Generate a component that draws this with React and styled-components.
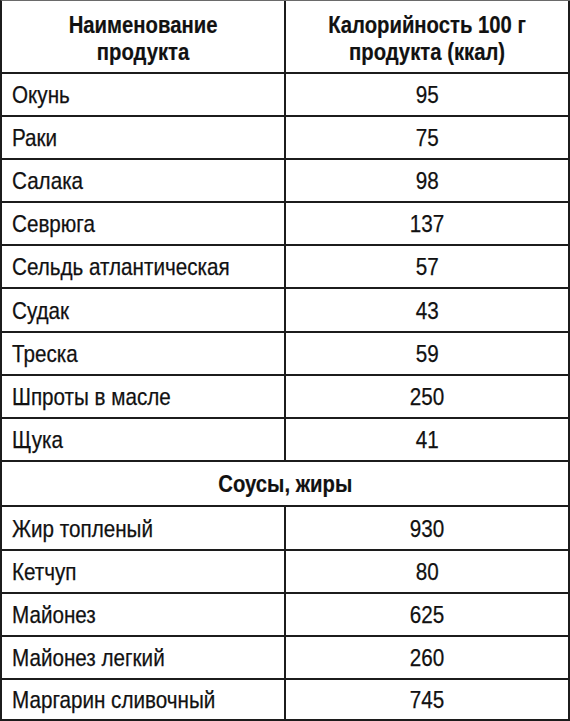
import React from "react";
import styled, { createGlobalStyle } from "styled-components";

const Global = createGlobalStyle`
  html, body { margin: 0; padding: 0; background: #fff; }
  body {
    font-family: "Liberation Sans", Arial, Helvetica, sans-serif;
    color: #111;
  }
`;

const Table = styled.table`
  width: 570px;
  table-layout: fixed;
  border-spacing: 0;
  border-collapse: separate;
  border-left: 2px solid #1c1c1c;
  border-top: 1px solid #6a6a6a;
  font-size: 24px;
  line-height: 27px;
`;

const Col = styled.col`
  width: 284px;
`;

const HeadRow = styled.tr`
  height: 73px;
`;

const Row = styled.tr`
  height: ${(p) => p.$h || 43.2}px;
`;

const Cell = styled.td`
  box-sizing: border-box;
  border-right: 2px solid #1c1c1c;
  border-bottom: 2px solid #1c1c1c;
  padding: ${(p) => (p.$align === "left" ? "0 0 0 10px" : "0")};
  text-align: ${(p) => p.$align || "center"};
  vertical-align: middle;
  font-weight: ${(p) => (p.$bold ? 700 : 400)};
  white-space: nowrap;
  overflow: hidden;
`;

const HeadCell = styled(Cell).attrs({ as: "th" })`
  padding-top: 3px;
`;

const Label = styled.span`
  display: inline-block;
  transform: scaleX(${(p) => (p.$bold ? 0.845 : 0.86)});
  transform-origin: ${(p) => (p.$align === "left" ? "left center" : "center center")};
  -webkit-text-stroke: ${(p) => (p.$bold ? "0.2px" : "0.25px")} #111;
`;

const fish = [
  ["Окунь", "95"],
  ["Раки", "75"],
  ["Салака", "98"],
  ["Севрюга", "137"],
  ["Сельдь атлантическая", "57"],
  ["Судак", "43"],
  ["Треска", "59"],
  ["Шпроты в масле", "250"],
  ["Щука", "41"],
];

const sauces = [
  ["Жир топленый", "930"],
  ["Кетчуп", "80"],
  ["Майонез", "625"],
  ["Майонез легкий", "260"],
  ["Маргарин сливочный", "745"],
];

function DataRow({ name, value, h }) {
  return (
    <Row $h={h}>
      <Cell $align="left">
        <Label $align="left">{name}</Label>
      </Cell>
      <Cell>
        <Label>{value}</Label>
      </Cell>
    </Row>
  );
}

export default function App() {
  return (
    <>
      <Global />
      <Table>
        <colgroup>
          <Col />
          <Col />
        </colgroup>
        <thead>
          <HeadRow>
            <HeadCell $bold>
              <Label $bold>
                Наименование
                <br />
                продукта
              </Label>
            </HeadCell>
            <HeadCell $bold>
              <Label $bold>
                Калорийность 100 г
                <br />
                продукта (ккал)
              </Label>
            </HeadCell>
          </HeadRow>
        </thead>
        <tbody>
          {fish.map(([n, v]) => (
            <DataRow key={n} name={n} value={v} h={43.1} />
          ))}
          <Row $h={45.6}>
            <Cell colSpan={2} $bold>
              <Label $bold>Соусы, жиры</Label>
            </Cell>
          </Row>
          {sauces.map(([n, v], i) => (
            <DataRow
              key={n}
              name={n}
              value={v}
              h={i === sauces.length - 1 ? 40.6 : 43.2}
            />
          ))}
        </tbody>
      </Table>
    </>
  );
}
